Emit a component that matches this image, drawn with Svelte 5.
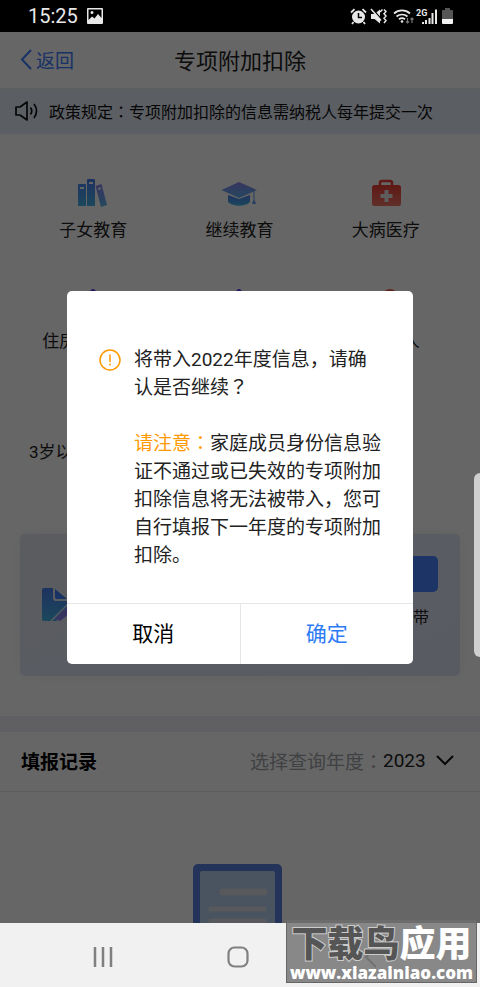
<script lang="ts">
  const items = [
    { name: '子女教育', icon: 'books' },
    { name: '继续教育', icon: 'cap' },
    { name: '大病医疗', icon: 'medkit' },
    { name: '住房贷款利息', icon: 'house' },
    { name: '住房租金', icon: 'house' },
    { name: '赡养老人', icon: 'elder' },
    { name: '3岁以下子女照护', icon: 'baby' },
  ];
  const years = ['2023', '2022', '2021'];
  let year = '2023';
</script>

<div class="phone">
  <div class="status">
    <span class="clock">15:25</span>
    <svg class="picture" width="16" height="16" viewBox="0 0 16 16">
      <path fill="#e8e8e8" fill-rule="evenodd" d="M1 0h14a1 1 0 0 1 1 1v14a1 1 0 0 1-1 1H1a1 1 0 0 1-1-1V1a1 1 0 0 1 1-1zM1.500 1.500v10.500l3.500-3.500 2.500 2 3.500-4.500 3.500 4V1.500zM5 3a1.500 1.500 0 1 1 0 3 1.500 1.500 0 0 1 0-3z" />
    </svg>
    <div class="signals">
      <svg width="17" height="17" viewBox="0 0 17 17" fill="none" stroke="#e8e8e8">
        <circle cx="8.500" cy="9" r="6.500" fill="#e8e8e8" stroke="none" />
        <path stroke="#000" stroke-width="1.500" d="M8.500 5v4.500H12" />
        <path stroke-width="1.800" d="M1 4.500 4.500 1.200M16 4.500l-3.500-3.300M3.500 14 2 16M13.500 14l1.500 2" />
      </svg>
      <svg width="17" height="17" viewBox="0 0 17 17" fill="none" stroke="#e8e8e8">
        <path fill="#e8e8e8" stroke="none" d="M1 6h3.500L10 1.500v14L4.500 11H1z" />
        <path stroke="#000" stroke-width="1.500" d="M2.500 1 12 12" />
        <path stroke-width="1.500" d="M1 1 11 12.500M10 4l2.500-2.500M14 1.500l2 2-2 2.200 2 2.300-2 2.300 2 2.200-2 2.500" />
      </svg>
      <svg class="wifi" width="22" height="17" viewBox="0 0 22 17" fill="none" stroke="#e8e8e8" stroke-width="1.700">
        <path d="M1 5.500a12 12 0 0 1 16 0M3.500 8.500a8.500 8.500 0 0 1 11 0M6 11.200a5 5 0 0 1 6 0" />
        <circle cx="9" cy="13.500" r="1.300" fill="#e8e8e8" stroke="none" />
        <path stroke="#777" stroke-width="1.200" d="M14.500 10v5M13 13.500l1.500 1.500 1.500-1.500M19 15v-5M17.500 11.500 19 10l1.500 1.500" />
      </svg>
      <div class="cell">
        <span>2G</span>
        <svg width="19" height="17" viewBox="0 0 19 17">
          <path fill="#e8e8e8" d="M4 14h2v2H4zM7 12h2v4H7zM10.500 10h2v6h-2zM13.500 5h2v11h-2zM17 1.500h2V16h-2z" />
        </svg>
      </div>
      <svg class="battery" width="11" height="17" viewBox="0 0 11 17">
        <path fill="#555" d="M3 0h5v2h2a1 1 0 0 1 1 1v8H0V3a1 1 0 0 1 1-1h2z" />
        <path fill="#f2f2f2" d="M0 11h11v4a1 1 0 0 1-1 1H1a1 1 0 0 1-1-1z" />
      </svg>
    </div>
  </div>

  <div class="app">
    <svg class="defs" width="0" height="0" aria-hidden="true">
      <defs>
        <linearGradient id="sky" x1="0" y1="0" x2="0" y2="1">
          <stop offset="0" stop-color="#4c7df0" />
          <stop offset="1" stop-color="#45b4e8" />
        </linearGradient>
        <linearGradient id="violet" x1="0" y1="0" x2="0" y2="1">
          <stop offset="0" stop-color="#8a83f0" />
          <stop offset="1" stop-color="#5cb4ee" />
        </linearGradient>
        <linearGradient id="red" x1="0" y1="0" x2="0" y2="1">
          <stop offset="0" stop-color="#ee4034" />
          <stop offset="1" stop-color="#f07468" />
        </linearGradient>
      </defs>
    </svg>

    <header>
      <button class="back">
        <svg width="12" height="21" viewBox="0 0 12 21" fill="none" stroke="currentColor" stroke-width="2">
          <path d="M11 1 2 10.500 11 20" />
        </svg>
        返回
      </button>
      <h1>专项附加扣除</h1>
    </header>

    <p class="notice">
      <svg width="24" height="20" viewBox="0 0 24 20" fill="none" stroke="#111" stroke-width="1.700">
        <path stroke-linejoin="round" d="M1 6h4l7-5v18l-7-5H1z" />
        <path d="M15.500 6.500a6 6 0 0 1 0 7M19 3a11 11 0 0 1 0 14" />
      </svg>
      <span>政策规定<span class="mid">：</span>专项附加扣除的信息需纳税人每年提交一次</span>
    </p>

    <div class="grid">
      {#each items as item}
        <button class="item">
          <svg width="36" height="30" viewBox="0 0 36 30">
            {#if item.icon === 'books'}
              <path fill="url(#sky)" fill-rule="evenodd" d="M4 6h6a1 1 0 0 1 1 1v21H3V7a1 1 0 0 1 1-1zm1 3v2h4V9zM13 1h6a1 1 0 0 1 1 1v26h-8V2a1 1 0 0 1 1-1zm1 3v2h4V4z" />
              <path fill="url(#violet)" fill-rule="evenodd" d="m20.500 8 6-2 5.500 21-6 2zm2.500 2 .5 2 2.500-.7-.5-2z" />
            {:else if item.icon === 'cap'}
              <path fill="url(#violet)" d="M18 4 36 12 18 20 .500 12z" />
              <path fill="url(#sky)" d="M7 17l11 4 11-4v7c-5 5-17 5-22 0z" />
              <path fill="#5c9cee" d="M32.500 13h1v9l1.500 4h-4l1.500-4z" />
            {:else if item.icon === 'medkit'}
              <path fill="none" stroke="#ee4034" stroke-width="2.500" d="M12 8V5q0-2 2-2h8q2 0 2 2v3" />
              <rect x="4" y="7" width="29" height="21" rx="2.500" fill="url(#red)" />
              <path fill="#e8e8e8" d="M16.500 12h4v4h4v4h-4v4h-4v-4h-4v-4h4z" />
            {:else if item.icon === 'house'}
              <path fill="#4a3cf0" d="M15 2q3-4 6 0l13 11v15H2V13z" />
            {:else if item.icon === 'elder'}
              <circle cx="22" cy="9" r="9" fill="#ee5a44" />
              <path fill="#ee5a44" d="M8 28q10-18 22 0z" />
            {:else}
              <circle cx="18" cy="15" r="12" fill="url(#sky)" />
            {/if}
          </svg>
          <span>{item.name}</span>
        </button>
      {/each}
    </div>

    <section class="card">
      <svg width="50" height="33" viewBox="0 0 50 33">
        <path fill="url(#sky)" d="M2 0h9v10q0 3 3 3h20v7L14 33H2q-2 0-2-2V2q0-2 2-2z" />
        <path fill="#3d7eff" d="M13 1 25 11H15q-2 0-2-2z" />
        <path fill="#8a83f0" d="M12 31 30 15v8L19 33z" />
        <path stroke="#d4e2f8" stroke-width="1.500" d="M9 33 29 13M19 33l13-10" />
      </svg>
      <div class="quick">
        <button class="fill">一键带入</button>
        <span>将上年信息一键带</span>
      </div>
    </section>

    <section class="records">
      <div class="records-head">
        <h2>填报记录</h2>
        <label for="year">选择查询年度<span class="mid">：</span></label>
        <div class="year">
          <select id="year" bind:value={year}>
            {#each years as y}
              <option value={y}>{y}</option>
            {/each}
          </select>
          <svg width="18" height="11" viewBox="0 0 18 11" fill="none" stroke="#111" stroke-width="2">
            <path d="M1 1l8 8 8-8" />
          </svg>
        </div>
      </div>
      <svg class="empty" width="94" height="110" viewBox="0 0 94 110">
        <rect width="89" height="110" rx="5" fill="#5a80e0" />
        <rect x="7" y="7" width="75" height="96" rx="2" fill="#b8d0f0" />
        <path stroke="#dcdfe6" stroke-width="7" stroke-linecap="round" d="M30 28h41" />
        <path stroke="#dcdfe6" stroke-width="5" stroke-linecap="round" d="M18 45h53M18 57h53M18 69h53" />
      </svg>
    </section>

    <div class="mask">
      <div class="dialog" role="alertdialog" aria-modal="true" aria-describedby="message">
        <div class="content">
          <svg width="22" height="22" viewBox="0 0 22 22" fill="none" stroke="#f90" stroke-width="1.500">
            <circle cx="11" cy="11" r="10" />
            <path d="M11 5.500v7.500M11 14.500v2" />
          </svg>
          <div id="message">
            <p>将带入2022年度信息，请确认是否继续<span class="mid">？</span></p>
            <p><em>请注意<span class="mid">：</span></em>家庭成员身份信息验证不通过或已失效的专项附加扣除信息将无法被带入，您可自行填报下一年度的专项附加扣除。</p>
          </div>
        </div>
        <div class="actions">
          <button>取消</button>
          <button class="ok">确定</button>
        </div>
      </div>
    </div>
  </div>

  <nav>
    <button aria-label="最近">
      <svg width="22" height="22" viewBox="0 0 22 22" stroke="#808080" stroke-width="2.500">
        <path d="M3 1v20M11 1v20M19 1v20" />
      </svg>
    </button>
    <button aria-label="主页">
      <svg width="22" height="22" viewBox="0 0 22 22" fill="none" stroke="#808080" stroke-width="2.200">
        <rect x="1.500" y="1.500" width="19" height="19" rx="6" />
      </svg>
    </button>
    <button aria-label="返回">
      <svg width="22" height="22" viewBox="0 0 22 22" fill="none" stroke="#808080" stroke-width="2.200">
        <path d="M15 1 5 11l10 10" />
      </svg>
    </button>
  </nav>

  <div class="edge"></div>
  <div class="watermark">
    <strong><span>下载鸟</span>应用</strong>
    <small>www.xiazainiao.com</small>
  </div>
</div>

<style>
  :global(body) {
    margin: 0;
  }
  .phone {
    position: relative;
    display: flex;
    flex-direction: column;
    height: 100vh;
    overflow: hidden;
    background: #fff;
    color: #222;
    font-family: Roboto, 'Noto Sans CJK SC', sans-serif;
    font-size: 17px;
  }
  button,
  select {
    border: 0;
    padding: 0;
    background: none;
    font: inherit;
    color: inherit;
  }
  h1,
  h2,
  p {
    margin: 0;
  }
  svg {
    display: block;
    flex: none;
  }
  /* full-width punctuation centred in its box */
  .mid {
    font-family: 'Noto Sans CJK TC', sans-serif;
    line-height: 0;
  }

  .status {
    flex: none;
    display: flex;
    align-items: center;
    height: 32px;
    padding: 0 27px 0 28px;
    background: #000;
    color: #e8e8e8;
  }
  .clock {
    font-size: 20px;
  }
  .picture {
    margin-left: 9px;
  }
  .signals {
    display: flex;
    align-items: center;
    gap: 3px;
    margin-left: auto;
  }
  .wifi {
    margin-left: 3px;
  }
  .cell {
    position: relative;
  }
  .cell span {
    position: absolute;
    top: 0;
    left: -2px;
    font-size: 9px;
    font-weight: 700;
    line-height: 11px;
  }
  .battery {
    margin-left: 2px;
  }

  .app {
    position: relative;
    flex: 1;
    min-height: 0;
    overflow: hidden;
  }
  .defs {
    position: absolute;
  }
  header {
    display: grid;
    grid-template-columns: 1fr auto 1fr;
    align-items: center;
    height: 54px;
    padding: 0 20px 2px;
    border-bottom: 1px solid #eee;
  }
  .back {
    display: flex;
    align-items: center;
    gap: 4px;
    color: #3d7eff;
    font-size: 19px;
  }
  h1 {
    font-size: 22px;
    font-weight: 400;
  }
  .notice {
    display: flex;
    align-items: center;
    gap: 10px;
    height: 44px;
    padding: 0 15px 1px;
    background: #e4eaf6;
    font-size: 16px;
    color: #111;
    white-space: nowrap;
  }

  .grid {
    display: grid;
    grid-template-columns: repeat(3, 1fr);
    grid-auto-rows: 111px;
    padding: 44px 21px 0 20px;
  }
  .item {
    display: flex;
    flex-direction: column;
    align-items: center;
    gap: 9px;
    white-space: nowrap;
  }
  .item span {
    line-height: 26px;
  }

  .card {
    display: flex;
    justify-content: space-between;
    margin: 23px 20px 40px;
    padding: 22px;
    height: 98px;
    border-radius: 5px;
    background: linear-gradient(160deg, #e2e6ee, #dfe6f4 50%, #dfe4f4);
    box-shadow: 0 0 12px #f2f4f8;
  }
  .card svg {
    margin-top: 32px;
  }
  .quick {
    text-align: right;
  }
  .fill {
    display: block;
    width: 140px;
    height: 36px;
    margin: 0 0 12px;
    border-radius: 5px;
    background: #4684ff;
    color: #fff;
  }
  .quick span {
    margin-right: 9px;
    font-size: 16px;
  }

  .records {
    border-top: 16px solid #f0f0f6;
  }
  .records-head {
    display: flex;
    align-items: center;
    height: 57px;
    padding: 0 26px 2px 21px;
    border-bottom: 1px solid #e6e6e6;
    font-size: 19px;
  }
  h2 {
    flex: 1;
    font-size: 19px;
    font-weight: 700;
    color: #000;
  }
  label {
    color: #a0a3a8;
  }
  .year {
    display: flex;
    align-items: center;
    gap: 10px;
  }
  select {
    appearance: none;
  }
  .empty {
    margin: 72px auto 0;
  }

  .mask {
    position: absolute;
    inset: 0;
    display: flex;
    align-items: center;
    padding: 0 67px;
    background: rgba(0, 0, 0, 0.6);
  }
  .dialog {
    flex: 1;
    border-radius: 5px;
    background: #fff;
    overflow: hidden;
  }
  .content {
    display: flex;
    gap: 13px;
    padding: 55px 31px 33px 32px;
    font-size: 19px;
    line-height: 28px;
  }
  .content svg {
    margin-top: 3px;
  }
  .content p + p {
    margin-top: 28px;
  }
  em {
    color: #f90;
    font-style: normal;
  }
  .actions {
    display: flex;
    border-top: 1px solid #e6e6e6;
  }
  .actions button {
    flex: 1;
    height: 60px;
    padding-bottom: 4px;
    font-size: 21px;
    color: #000;
  }
  .actions .ok {
    border-left: 1px solid #e6e6e6;
    color: #2d7af6;
  }

  nav {
    flex: none;
    display: flex;
    justify-content: space-between;
    align-items: center;
    height: 64px;
    padding: 0 97px 0 92px;
    background: #f1f1f1;
  }
  nav button {
    padding-top: 4px;
  }

  .edge {
    position: absolute;
    top: 473px;
    right: 0;
    width: 6px;
    height: 184px;
    border-radius: 6px 0 0 6px;
    background: #d0d0d0;
  }
  .watermark {
    position: absolute;
    right: 3px;
    bottom: 4px;
    display: flex;
    flex-direction: column;
    align-items: center;
    box-sizing: border-box;
    width: 191px;
    height: 64px;
    padding-top: 6px;
    border: 1px solid #666;
    background: rgba(110, 110, 110, 0.8);
    color: #fff;
    white-space: nowrap;
  }
  .watermark strong {
    font-size: 36px;
    font-weight: 900;
    line-height: 38px;
  }
  .watermark strong span {
    color: #555;
    paint-order: stroke;
    -webkit-text-stroke: 2px #ccc;
  }
  .watermark small {
    font-family: 'Open Sans', sans-serif;
    font-size: 17px;
    font-weight: 800;
    line-height: 18px;
  }
</style>
